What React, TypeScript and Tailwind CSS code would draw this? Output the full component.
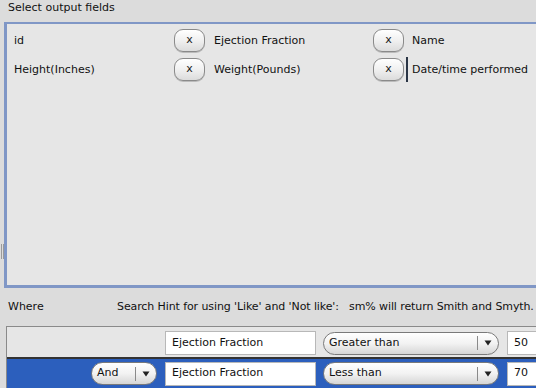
import React from "react";

const font = { fontFamily: '"DejaVu Sans", "Liberation Sans", sans-serif' };

function XBtn() {
  return (
    <div className="shrink-0 w-[31px] h-[23px] rounded-[9px] border border-[#8a8a8a] bg-gradient-to-b from-[#ffffff] via-[#f0f0f0] to-[#dcdcdc] flex items-center justify-center text-[11px] text-[#222] shadow-[0_1px_0_#bbb]">
      x
    </div>
  );
}

function Combo({ label, w }: { label: string; w: string }) {
  return (
    <div
      className={`${w} shrink-0 h-[23px] rounded-full border border-[#7a7a7a] bg-gradient-to-b from-[#ffffff] via-[#f2f2f2] to-[#d6d6d6] flex items-center text-[11px] text-[#111]`}
    >
      <span className="pl-[5px] flex-1">{label}</span>
      <span className="w-px h-[14px] bg-[#8a8a8a]" />
      <span className="w-[20px] flex justify-center">
        <svg width="8" height="6" viewBox="0 0 8 6">
          <path d="M0.5 0.5 L7.5 0.5 L4 5.5 Z" fill="#222" />
        </svg>
      </span>
    </div>
  );
}

function Field({ text, w }: { text: string; w: string }) {
  return (
    <div className={`${w} shrink-0 h-[24px] bg-white border border-[#b8b8b8] flex items-center pl-[6px] text-[11px] text-[#111]`}>
      {text}
    </div>
  );
}

export default function App() {
  return (
    <div className="w-[536px] h-[388px] overflow-hidden bg-[#dcdcdc] flex flex-col text-[#111]" style={font}>
      <div className="h-[22px] pl-[8px] pt-[1px] text-[11px] leading-[14px] flex items-start">Select output fields</div>
      <div className="relative h-[266px] ml-[4px] border-l-[3px] border-t-[2px] border-b-[3px] border-[#8097c6] bg-[#e6e6e6]">
        <div className="absolute left-[-6px] top-[220px] w-[3px] h-[15px] border-x border-[#9a9a9a]" />
        <div className="pt-[5px] flex flex-col gap-[6px] text-[11px]">
          <div className="flex items-center h-[23px]">
            <span className="w-[167px] pl-[7px] pt-[1px]">id</span>
            <XBtn />
            <span className="w-[168px] pl-[9px] pt-[1px]">Ejection Fraction</span>
            <XBtn />
            <span className="pl-[8px] pt-[1px]">Name</span>
          </div>
          <div className="flex items-center h-[23px]">
            <span className="w-[167px] pl-[7px] pt-[1px]">Height(Inches)</span>
            <XBtn />
            <span className="w-[168px] pl-[9px] pt-[1px]">Weight(Pounds)</span>
            <XBtn />
            <span className="w-[2px] h-[25px] bg-[#2a3545] ml-[2px]" />
            <span className="pl-[4px] pt-[1px]">Date/time performed</span>
          </div>
        </div>
      </div>
      <div className="h-[38px] flex items-center text-[11px] whitespace-nowrap">
        <span className="w-[117px] shrink-0 pl-[8px]">Where</span>
        <span className="tracking-[-0.1px]">Search Hint for using 'Like' and 'Not like':&nbsp;&nbsp;&nbsp;sm% will return Smith and Smyth.</span>
      </div>
      <div className="ml-[6px] flex-1 border-t border-l border-[#8a8a8a] flex flex-col">
        <div className="h-[30px] pt-[2px] bg-[#e6e6e6] flex items-center">
          <div className="w-[158px] shrink-0" />
          <Field text="Ejection Fraction" w="w-[151px]" />
          <div className="w-[7px] shrink-0" />
          <Combo label="Greater than" w="w-[176px]" />
          <div className="w-[8px] shrink-0" />
          <Field text="50" w="w-[40px]" />
        </div>
        <div className="h-[2px] bg-[#333]" />
        <div className="flex-1 bg-[#2c5fbd] flex items-center">
          <div className="w-[84px] shrink-0" />
          <Combo label="And" w="w-[66px]" />
          <div className="w-[8px] shrink-0" />
          <Field text="Ejection Fraction" w="w-[151px]" />
          <div className="w-[7px] shrink-0" />
          <Combo label="Less than" w="w-[176px]" />
          <div className="w-[8px] shrink-0" />
          <Field text="70" w="w-[40px]" />
        </div>
      </div>
    </div>
  );
}
